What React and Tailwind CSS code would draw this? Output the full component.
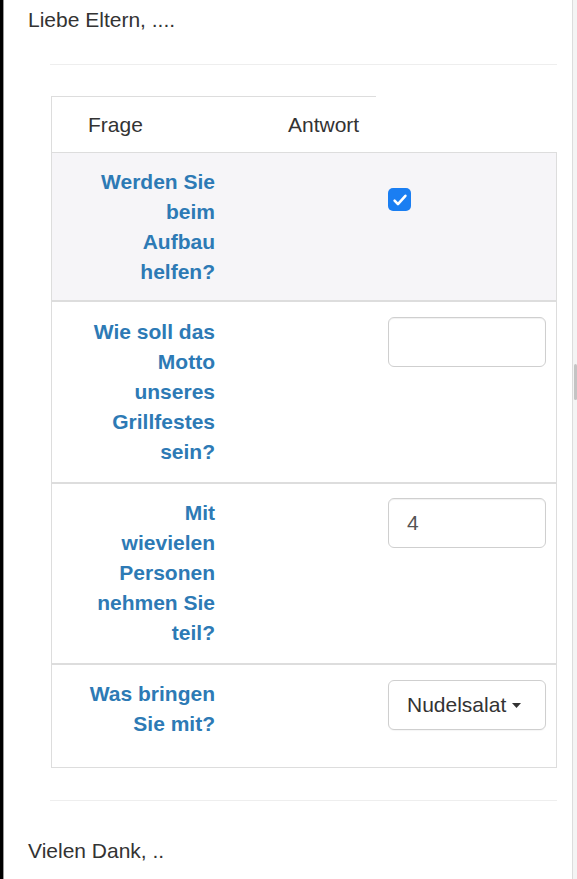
import React from 'react';

const rows = [
  { lines: ['Werden Sie', 'beim', 'Aufbau', 'helfen?'], kind: 'check', h: 'h-[148px]', bg: 'bg-[#f6f5f8]', pad: 'pt-[14px]', ctl: 'mt-[35px]' },
  { lines: ['Wie soll das', 'Motto', 'unseres', 'Grillfestes', 'sein?'], kind: 'text', h: 'h-[182px]', bg: 'bg-white', pad: 'pt-[15px]', ctl: 'mt-[15px]' },
  { lines: ['Mit', 'wievielen', 'Personen', 'nehmen Sie', 'teil?'], kind: 'number', h: 'h-[181px]', bg: 'bg-white', pad: 'pt-[14px]', ctl: 'mt-[14px]' },
  { lines: ['Was bringen', 'Sie mit?'], kind: 'select', h: 'h-[104px]', bg: 'bg-white', pad: 'pt-[14px]', ctl: 'mt-[15px]' },
];

// Antwort-Feld je nach Typ
const Answer = ({ kind }) => {
  if (kind === 'check') {
    return (
      <div className="w-[23px] h-[23px] rounded-[5px] bg-[#1a7ef2] flex items-center justify-center">
        <svg width="18" height="18" viewBox="0 0 16 16" fill="none">
          <path d="M3.2 8.6l3 3.1L12.8 4.3" stroke="white" strokeWidth="2.3" strokeLinecap="round" strokeLinejoin="round" />
        </svg>
      </div>
    );
  }
  if (kind === 'select') {
    return (
      <div className="w-[158px] h-[50px] rounded-[6px] border border-[#cfcfcf] bg-white flex items-center pl-[18px] text-[#333] shadow-[0_1px_1px_rgba(0,0,0,0.04)]">
        <span>Nudelsalat</span>
        <svg className="ml-[6px]" width="9" height="5" viewBox="0 0 9 5">
          <path d="M0 0h9L4.5 5z" fill="#333" />
        </svg>
      </div>
    );
  }
  return (
    <div className="w-[158px] h-[50px] rounded-[6px] border border-[#cfcfcf] bg-white flex items-center pl-[18px] text-[#555] shadow-[inset_0_1px_1px_rgba(0,0,0,0.06)]">
      {kind === 'number' ? '4' : ''}
    </div>
  );
};

export default function App() {
  return (
    <div className="flex h-[879px] w-full overflow-hidden bg-white font-['Liberation_Sans',Arial,sans-serif] text-[21px] leading-[30px] text-[#333]">
      <div className="w-[3px] bg-black" />
      <div className="w-px bg-[#9a9a9a]" />

      <div className="flex-1 flex flex-col">
        <div className="pl-[24px] pt-[5px]">Liebe Eltern, ....</div>

        <div className="pl-[46px] pr-[15px] mt-[29px]">
          <div className="h-px bg-[#eeeeee]" />

          {/* Tabelle */}
          <div className="ml-px mt-[31px] border-l border-b border-[#dddddd]">
            <div className="w-[324px] h-px bg-[#dddddd]" />
            <div className="flex h-[55px] items-center pl-[36px]">
              <div className="w-[200px]">Frage</div>
              <div>Antwort</div>
            </div>

            {rows.map((row, i) => (
              <div
                key={i}
                className={`flex border-r border-[#dddddd] ${row.bg} ${row.h} ${i === 0 ? 'border-t' : 'border-t-2'}`}
              >
                <div className={`w-[163px] pl-[35px] text-right font-bold text-[#2d7ab5] ${row.pad}`}>
                  {row.lines.map((l) => (
                    <div key={l}>{l}</div>
                  ))}
                </div>
                <div className={`ml-[173px] ${row.ctl}`}>
                  <Answer kind={row.kind} />
                </div>
              </div>
            ))}
          </div>

          <div className="h-px bg-[#eeeeee] mt-[32px]" />
        </div>

        <div className="pl-[24px] mt-[35px]">Vielen Dank, ..</div>
      </div>

      {/* Scrollleiste rechts */}
      <div className="w-[5px] border-l border-[#dcdcdc] bg-[#f4f4f4] flex flex-col">
        <div className="h-[364px]" />
        <div className="h-[36px] w-[3px] ml-auto bg-[#c4c4c4] rounded-sm" />
      </div>
    </div>
  );
}
